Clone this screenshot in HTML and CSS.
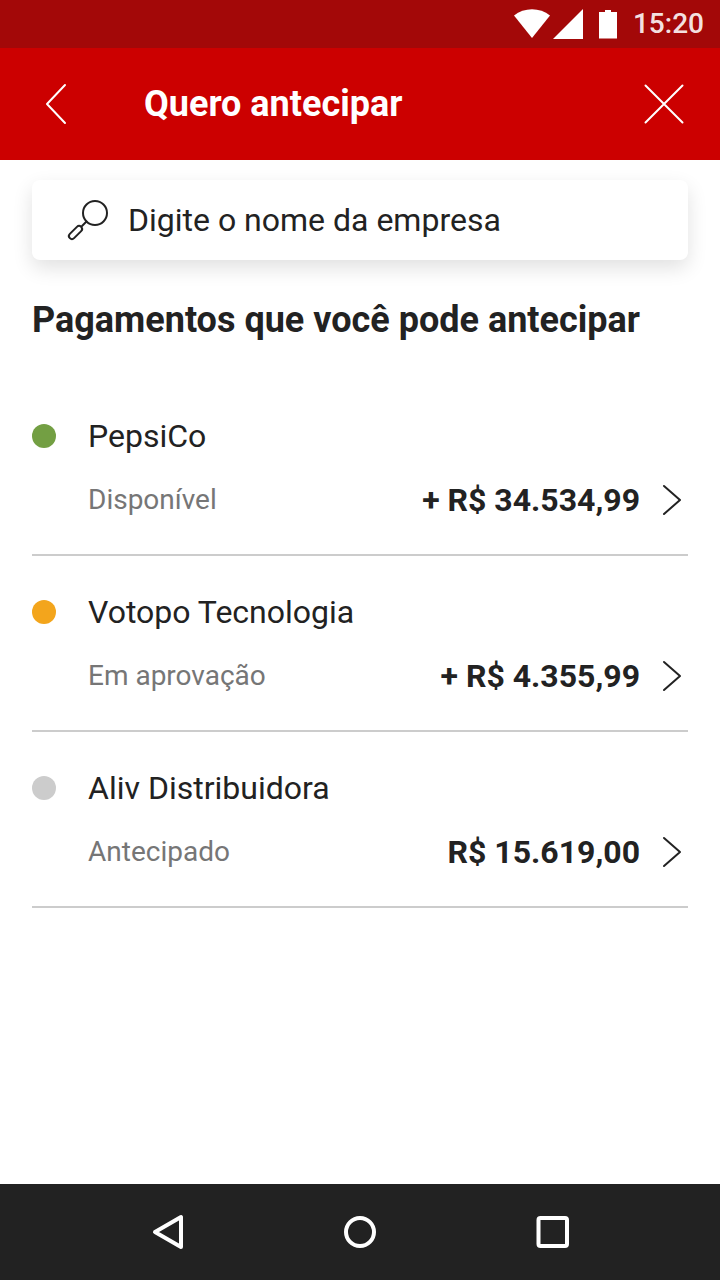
FILE: index.html
```html
<!DOCTYPE html>
<html lang="pt-BR">
<head>
  <meta charset="UTF-8">
  <title>Quero antecipar</title>
  <meta name="viewport" content="width=device-width, initial-scale=1.0">
  <link rel="stylesheet" href="styles.css">
</head>
<body>

<div class="status-bar">
  <svg width="36" height="30" viewBox="0 0 36 30" fill="#fff"><path d="M0 6.500C10-1.800 26-1.800 36 6.500L18 29z"/></svg>
  <svg width="30" height="30" viewBox="0 0 30 30" fill="#fff"><path d="M30 0v30H0z"/></svg>
  <svg class="battery" width="18" height="30" viewBox="0 0 18 30" fill="#fff"><path d="M6 1h6v2h6v26.500H0V3h6z"/></svg>
  <span class="clock">15:20</span>
</div>

<header class="header">
  <button type="button" class="icon-button" aria-label="Voltar">
    <svg width="48" height="48" viewBox="0 0 48 48" fill="none" stroke="#fff" stroke-width="2" stroke-linecap="round" stroke-linejoin="round"><path d="M33 5L15 24l18 19"/></svg>
  </button>
  <h1>Quero antecipar</h1>
  <button type="button" class="icon-button" aria-label="Fechar">
    <svg width="48" height="48" viewBox="0 0 48 48" fill="none" stroke="#fff" stroke-width="2" stroke-linecap="round"><path d="M5.500 5.500l37 37M42.500 5.500l-37 37"/></svg>
  </button>
</header>

<main class="content">
  <form class="search">
    <label for="empresa" aria-label="Empresa">
      <svg width="48" height="48" viewBox="0 0 48 48" fill="none" stroke="#222" stroke-width="2" stroke-linecap="round">
        <circle cx="31" cy="17" r="12"/>
        <path d="M22.500 25.500l-4.500 4.500"/>
        <rect x="-8" y="-3" width="16" height="6" rx="3" transform="translate(11.500 36.500) rotate(-45)"/>
      </svg>
    </label>
    <input type="text" id="empresa" name="empresa" placeholder="Digite o nome da empresa">
  </form>

  <h2>Pagamentos que você pode antecipar</h2>

  <ul class="payments">
    <li>
      <a href="#" class="payment">
        <span class="dot available"></span>
        <span class="company">PepsiCo</span>
        <span class="status">Disponível</span>
        <span class="amount">+ R$ 34.534,99</span>
        <svg class="arrow" width="20" height="32" viewBox="0 0 20 32"><path d="M2 2l16 14L2 30"/></svg>
      </a>
    </li>
    <li>
      <a href="#" class="payment">
        <span class="dot pending"></span>
        <span class="company">Votopo Tecnologia</span>
        <span class="status">Em aprovação</span>
        <span class="amount">+ R$ 4.355,99</span>
        <svg class="arrow" width="20" height="32" viewBox="0 0 20 32"><path d="M2 2l16 14L2 30"/></svg>
      </a>
    </li>
    <li>
      <a href="#" class="payment">
        <span class="dot done"></span>
        <span class="company">Aliv Distribuidora</span>
        <span class="status">Antecipado</span>
        <span class="amount">R$ 15.619,00</span>
        <svg class="arrow" width="20" height="32" viewBox="0 0 20 32"><path d="M2 2l16 14L2 30"/></svg>
      </a>
    </li>
  </ul>
</main>

<nav class="nav-bar">
  <button type="button" aria-label="Voltar">
    <svg width="48" height="48" viewBox="0 0 48 48"><path d="M37 9v30L11 24z"/></svg>
  </button>
  <button type="button" aria-label="Início">
    <svg width="48" height="48" viewBox="0 0 48 48"><circle cx="24" cy="24" r="14"/></svg>
  </button>
  <button type="button" aria-label="Recentes">
    <svg width="48" height="48" viewBox="0 0 48 48"><rect x="10.500" y="10" width="28.500" height="28" rx="2"/></svg>
  </button>
</nav>

</body>
</html>
```
FILE: styles.css
```css
* { box-sizing: border-box; }
body {
  margin: 0; min-height: 100vh; display: flex; flex-direction: column;
  font-family: Roboto, sans-serif; color: #222; background: #fff;
}
button { padding: 0; border: none; background: none; cursor: pointer; }
svg { display: block; }

.status-bar {
  display: flex; align-items: center; justify-content: flex-end; gap: 3px;
  height: 48px; padding: 0 16px; background: #a30808;
}
.battery { margin: 0 13px; }
.clock { font-size: 28px; line-height: 48px; font-weight: 500; color: rgba(255,255,255,0.9); }

.header {
  display: flex; align-items: center;
  height: 112px; padding: 0 32px; background: #cc0000; color: #fff;
}
.header h1 { flex: 1; margin: 0 0 0 64px; font-size: 36px; line-height: 48px; font-weight: 700; }

.content { padding: 20px 32px; }

.search {
  display: flex; align-items: center; gap: 16px;
  height: 80px; padding: 0 32px; background: #fff; border-radius: 8px;
  box-shadow: 0 8px 20px rgba(0,0,0,0.12);
}
.search input {
  flex: 1; min-width: 0; padding: 0; border: none; outline: none; background: none;
  font-family: inherit; font-size: 32px; line-height: 40px; color: #222;
}
.search input::placeholder { color: #222; opacity: 1; }

h2 { margin: 36px 0; font-size: 36px; line-height: 48px; font-weight: 700; }

.payments { margin: 0; padding: 0; list-style: none; }
.payment {
  display: grid; grid-template-columns: 24px 1fr auto 20px; align-items: center;
  row-gap: 24px; padding: 36px 6px 34px 0; border-bottom: 2px solid #ccc;
  line-height: 40px; color: #222; text-decoration: none;
}
.dot { width: 24px; height: 24px; border-radius: 50%; }
.available { background: #739f43; }
.pending { background: #f3a51c; }
.done { background: #ccc; }
.company { grid-column: 2 / -1; margin-left: 32px; font-size: 32px; }
.status { grid-column: 2; margin-left: 32px; font-size: 28px; color: #767676; }
.amount { margin-right: 22px; font-size: 32px; font-weight: 700; }
.arrow { fill: none; stroke: #222; stroke-width: 2; stroke-linecap: round; stroke-linejoin: round; }

.nav-bar {
  display: flex; justify-content: center; gap: 144px;
  margin-top: auto; padding: 24px 0; background: #222;
}
.nav-bar svg { fill: none; stroke: #fff; stroke-width: 4; stroke-linejoin: round; }
```
